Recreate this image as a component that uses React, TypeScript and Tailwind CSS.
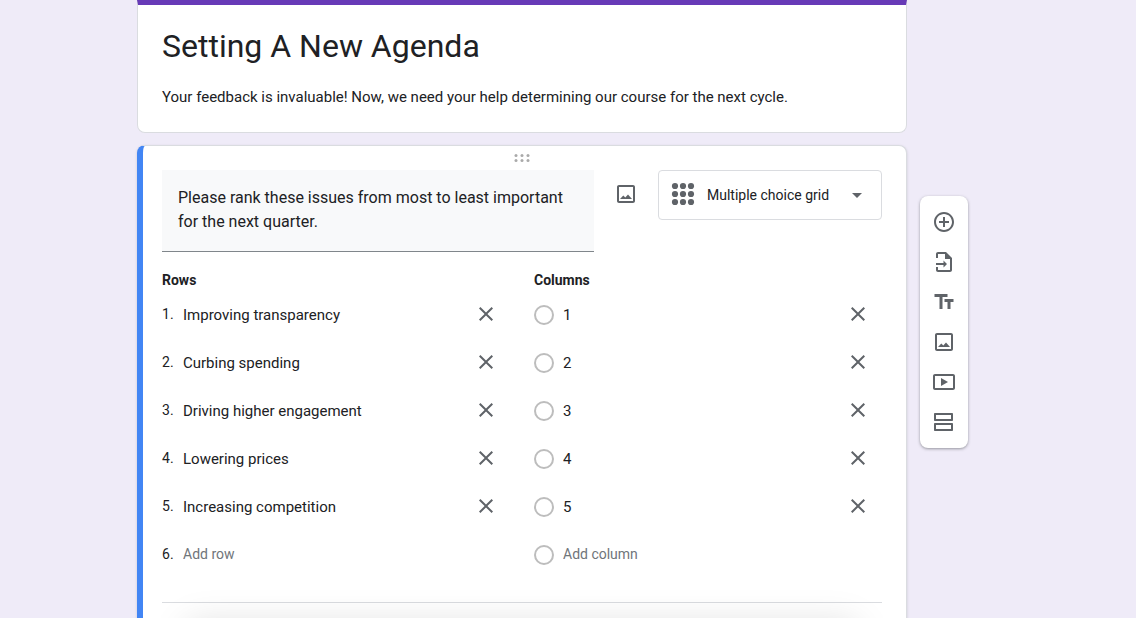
import { useState } from "react";
import type { ReactNode } from "react";

const rows = [
  "Improving transparency",
  "Curbing spending",
  "Driving higher engagement",
  "Lowering prices",
  "Increasing competition",
];

const columns = ["1", "2", "3", "4", "5"];

function Icon({ children }: { children: ReactNode }) {
  return (
    <svg viewBox="0 0 24 24" className="size-6 fill-[#5f6368]" aria-hidden="true">
      {children}
    </svg>
  );
}

function ImageIcon() {
  return (
    <Icon>
      <path d="M19 5v14H5V5h14m0-2H5c-1.1 0-2 .9-2 2v14c0 1.1.9 2 2 2h14c1.1 0 2-.9 2-2V5c0-1.1-.9-2-2-2z" />
      <path d="M14 12.6l-2.7 3-2-2L6 17h12z" />
    </Icon>
  );
}

const tools = [
  {
    label: "Add question",
    icon: (
      <Icon>
        <path d="M13 7h-2v4H7v2h4v4h2v-4h4v-2h-4V7zm-1-5C6.48 2 2 6.48 2 12s4.48 10 10 10 10-4.48 10-10S17.52 2 12 2zm0 18c-4.41 0-8-3.59-8-8s3.59-8 8-8 8 3.59 8 8-3.59 8-8 8z" />
      </Icon>
    ),
  },
  {
    label: "Import questions",
    icon: (
      <Icon>
        <path d="M14 2H6c-1.1 0-2 .9-2 2v4h2V4h7v5h5v11H6v-3H4v3c0 1.1.9 2 2 2h12c1.1 0 2-.9 2-2V8l-6-6z" />
        <path d="M11.5 10.5V13H4v2h7.5v2.5L15 14z" />
      </Icon>
    ),
  },
  {
    label: "Add title and description",
    icon: (
      <Icon>
        <path d="M2.5 4v3h5v12h3V7h5V4h-13zm19 5h-9v3h3v7h3v-7h3V9z" />
      </Icon>
    ),
  },
  { label: "Add image", icon: <ImageIcon /> },
  {
    label: "Add video",
    icon: (
      <Icon>
        <path d="M9 8v8l7-4z" />
        <path d="M21 4H3c-1.1 0-2 .9-2 2v12c0 1.1.9 2 2 2h18c1.1 0 2-.9 2-2V6c0-1.1-.9-2-2-2zm0 14H3V6h18v12z" />
      </Icon>
    ),
  },
  {
    label: "Add section",
    icon: (
      <Icon>
        <path d="M19 5v4H4V5h15m1-2H3c-.55 0-1 .45-1 1v6c0 .55.45 1 1 1h17c.55 0 1-.45 1-1V4c0-.55-.45-1-1-1zM19 15v4H4v-4h15m1-2H3c-.55 0-1 .45-1 1v6c0 .55.45 1 1 1h17c.55 0 1-.45 1-1v-6c0-.55-.45-1-1-1z" />
      </Icon>
    ),
  },
];

function RemoveButton({ label }: { label: string }) {
  return (
    <button type="button" aria-label={label} className="flex size-12 shrink-0 items-center justify-center">
      <Icon>
        <path d="M19 6.41L17.59 5 12 10.59 6.41 5 5 6.41 10.59 12 5 17.59 6.41 19 12 13.41 17.59 19 19 17.59 13.41 12z" />
      </Icon>
    </button>
  );
}

function Radio({ label }: { label: string }) {
  return (
    <span className="flex shrink-0 pt-0.5 pr-[9px]">
      <input
        type="radio"
        name="column"
        aria-label={label}
        className="size-5 appearance-none rounded-full border-2 border-[#bdbdbd]"
      />
    </span>
  );
}

export default function App() {
  const [type, setType] = useState("grid");

  return (
    <div className="h-screen overflow-hidden bg-[#efebf8] pr-[31px] font-[Roboto,sans-serif] text-[#202124]">
      <div className="grid grid-cols-[minmax(0,770px)_48px] justify-center gap-x-[13px] gap-y-3">
        <header className="rounded-b-lg border border-t-[5px] border-[#dadce0] border-t-[#673ab7] bg-white px-6 pt-[21px] pb-[25px]">
          <h1 className="text-[32px] leading-10">Setting A New Agenda</h1>
          <p className="mt-[21px] text-[15px] leading-5">
            Your feedback is invaluable! Now, we need your help determining our course for the next cycle.
          </p>
        </header>

        <main className="col-start-1 rounded-lg border-t border-r border-l-6 border-[#dadce0] border-l-[#4285f4] bg-white pr-6 pl-[19px] shadow-[0_1px_3px_rgba(0,0,0,0.15)]">
          <div className="flex h-6 justify-center pt-2">
            <svg viewBox="0 0 16 8" className="h-2 w-4 fill-[#aaaaaa]" aria-hidden="true">
              <circle cx="2" cy="1.5" r="1.5" />
              <circle cx="8" cy="1.5" r="1.5" />
              <circle cx="14" cy="1.5" r="1.5" />
              <circle cx="2" cy="6.5" r="1.5" />
              <circle cx="8" cy="6.5" r="1.5" />
              <circle cx="14" cy="6.5" r="1.5" />
            </svg>
          </div>

          <div className="flex items-start">
            <textarea
              aria-label="Question"
              rows={2}
              defaultValue="Please rank these issues from most to least important for the next quarter."
              className="block min-w-0 flex-1 resize-none overflow-hidden border-b border-[#80868b] bg-[#f8f9fa] px-4 pt-4 pb-[17px] text-base leading-6 outline-none"
            />
            <button type="button" aria-label="Add image to question" className="mx-2 flex size-12 items-center justify-center">
              <ImageIcon />
            </button>
            <div className="relative w-56">
              <select
                aria-label="Question type"
                value={type}
                onChange={(e) => setType(e.target.value)}
                className="h-[50px] w-full appearance-none rounded border border-[#dadce0] bg-white pl-12 text-sm"
              >
                <option value="choice">Multiple choice</option>
                <option value="grid">Multiple choice grid</option>
              </select>
              <svg viewBox="0 0 24 24" className="pointer-events-none absolute top-3 left-[13px] size-6 fill-[#5f6368]" aria-hidden="true">
                {[4, 12, 20].map((y) => [4, 12, 20].map((x) => <circle key={`${x}-${y}`} cx={x} cy={y} r="3.1" />))}
              </svg>
              <svg viewBox="0 0 10 5" className="pointer-events-none absolute top-[23px] right-5 h-[5px] w-2.5 fill-[#5f6368]" aria-hidden="true">
                <path d="M0 0h10L5 5z" />
              </svg>
            </div>
          </div>

          <div className="grid grid-cols-2 gap-6 pt-[18px]">
            <section>
              <h2 className="text-sm leading-5 font-bold">Rows</h2>
              <ol>
                {rows.map((row, i) => (
                  <li key={row} className="flex h-12 items-center">
                    <span className="w-[21px] shrink-0 text-sm">{i + 1}.</span>
                    <input
                      type="text"
                      aria-label={`Row ${i + 1}`}
                      defaultValue={row}
                      className="min-w-0 flex-1 pt-0.5 text-[15px] outline-none"
                    />
                    <RemoveButton label={`Remove row ${i + 1}`} />
                  </li>
                ))}
                <li className="flex h-12 items-center">
                  <span className="w-[21px] shrink-0 text-sm">{rows.length + 1}.</span>
                  <input
                    type="text"
                    aria-label="Add row"
                    placeholder="Add row"
                    className="min-w-0 flex-1 text-sm outline-none placeholder:text-[#70757a]"
                  />
                </li>
              </ol>
            </section>

            <section>
              <h2 className="text-sm leading-5 font-bold">Columns</h2>
              <ul>
                {columns.map((column) => (
                  <li key={column} className="flex h-12 items-center">
                    <Radio label={`Option ${column}`} />
                    <input
                      type="text"
                      aria-label={`Column ${column}`}
                      defaultValue={column}
                      className="min-w-0 flex-1 pt-0.5 text-[15px] outline-none"
                    />
                    <RemoveButton label={`Remove column ${column}`} />
                  </li>
                ))}
                <li className="flex h-12 items-center">
                  <Radio label="New option" />
                  <input
                    type="text"
                    aria-label="Add column"
                    placeholder="Add column"
                    className="min-w-0 flex-1 text-sm outline-none placeholder:text-[#70757a]"
                  />
                </li>
              </ul>
            </section>
          </div>

          <div className="mt-6 border-t border-[#dadce0] pt-5">
            {/* floating panel that peeks in from below */}
            <div className="mx-6 h-16 rounded-lg bg-white shadow-[0_0_36px_rgba(0,0,0,0.13)]" />
          </div>
        </main>

        <nav
          aria-label="Form tools"
          className="col-start-2 row-start-2 mt-[51px] flex flex-col self-start rounded-lg bg-white py-1.5 shadow-[0_1px_3px_rgba(60,64,67,0.5)]"
        >
          {tools.map((tool) => (
            <button key={tool.label} type="button" aria-label={tool.label} className="flex h-10 items-center justify-center">
              {tool.icon}
            </button>
          ))}
        </nav>
      </div>
    </div>
  );
}
